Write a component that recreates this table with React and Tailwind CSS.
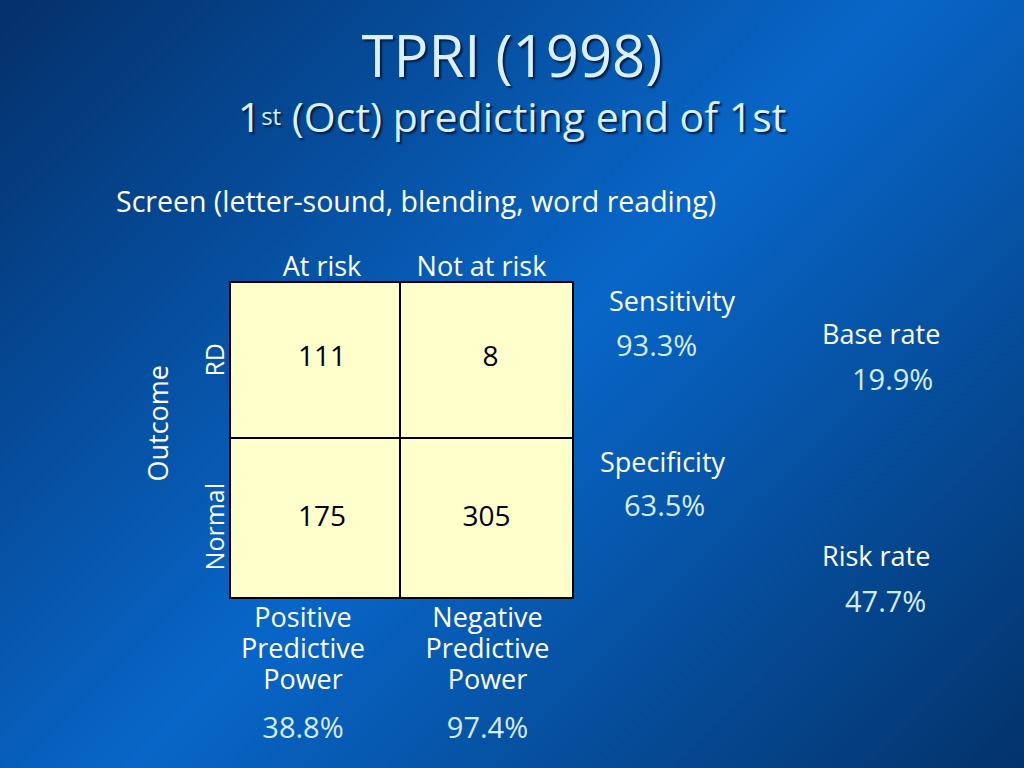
import React from "react";

const cells = [
  ["111", "8"],
  ["175", "305"],
];

function Stat({ label, value, labelPad, valuePad, top, gap }) {
  return (
    <div className={top}>
      <div className={`${labelPad} text-[27px] leading-[30px] text-white`}>{label}</div>
      <div className={`${valuePad} ${gap} text-[29px] leading-[34px] text-[#d6ecff]`}>{value}</div>
    </div>
  );
}

export default function App() {
  return (
    <div
      className="w-[1024px] h-[768px] overflow-hidden text-white bg-[linear-gradient(135deg,#04306a_0%,#0866c8_50%,#03336b_100%)]"
      style={{ fontFamily: '"Open Sans", "DejaVu Sans", sans-serif' }}
    >
      <header className="flex flex-col items-center pt-[25px] text-[#dcefff] [text-shadow:2px_2px_2px_#021d45]">
        <h1 className="text-[58px] leading-[60px]">TPRI (1998)</h1>
        <h2 className="mt-[8px] text-[41px] leading-[46px]">
          1<sup className="text-[24px] relative -top-[7px]">st</sup> (Oct) predicting end of 1st
        </h2>
      </header>

      <p className="mt-[45px] ml-[116px] text-[28.5px] leading-[34px]">
        Screen (letter-sound, blending, word reading)
      </p>

      <div className="flex mt-[37px]">
        {/* matrix */}
        <div className="ml-[136px] grid grid-cols-[44px_49px_172px_173px] grid-rows-[26px_158px_160px_auto]">
          <div />
          <div />
          <div className="flex items-end justify-center text-[27px] leading-[26px] pb-[2px] pl-[14px] whitespace-nowrap">At risk</div>
          <div className="flex items-end justify-center text-[27px] leading-[26px] pb-[2px] pr-[12px] whitespace-nowrap">Not at risk</div>

          <div className="row-span-2 flex items-center justify-center pb-[34px]">
            <span className="[writing-mode:vertical-rl] rotate-180 text-[27px] leading-[30px]">Outcome</span>
          </div>
          <div className="flex items-center justify-end pr-[1px]">
            <span className="[writing-mode:vertical-rl] rotate-180 text-[25px] leading-[28px]">RD</span>
          </div>
          <div className="bg-[#ffffcc] border-2 border-black flex items-center justify-center text-black text-[28px] pb-[10px] pl-[14px]">
            {cells[0][0]}
          </div>
          <div className="bg-[#ffffcc] border-2 border-l-0 border-black flex items-center justify-center text-black text-[28px] pb-[10px] pl-[8px]">
            {cells[0][1]}
          </div>

          <div className="flex items-center justify-end pr-[1px] pt-[16px]">
            <span className="[writing-mode:vertical-rl] rotate-180 text-[25px] leading-[28px]">Normal</span>
          </div>
          <div className="bg-[#ffffcc] border-2 border-t-0 border-black flex items-center justify-center text-black text-[28px] pb-[6px] pl-[14px]">
            {cells[1][0]}
          </div>
          <div className="bg-[#ffffcc] border-2 border-t-0 border-l-0 border-black flex items-center justify-center text-black text-[28px] pb-[6px]">
            {cells[1][1]}
          </div>

          <div />
          <div />
          <div className="flex flex-col items-center pt-[2px] pr-[24px]">
            <p className="text-center text-[27px] leading-[31px]">
              Positive<br />Predictive<br />Power
            </p>
            <span className="mt-[16px] text-[29px] leading-[34px] text-[#d6ecff]">38.8%</span>
          </div>
          <div className="flex flex-col items-center pt-[2px]">
            <p className="text-center text-[27px] leading-[31px]">
              Negative<br />Predictive<br />Power
            </p>
            <span className="mt-[16px] text-[29px] leading-[34px] text-[#d6ecff]">97.4%</span>
          </div>
        </div>

        {/* sensitivity / specificity */}
        <div className="ml-[26px] w-[200px] flex flex-col">
          <Stat top="mt-[31px]" label="Sensitivity" value="93.3%" labelPad="pl-[9px]" valuePad="pl-[16px]" gap="mt-[12px]" />
          <Stat top="mt-[85px]" label="Specificity" value="63.5%" labelPad="" valuePad="pl-[24px]" gap="mt-[11px]" />
        </div>

        {/* rates */}
        <div className="ml-[22px] flex flex-col">
          <Stat top="mt-[64px]" label="Base rate" value="19.9%" labelPad="" valuePad="pl-[30px]" gap="mt-[13px]" />
          <Stat top="mt-[145px]" label="Risk rate" value="47.7%" labelPad="" valuePad="pl-[23px]" gap="mt-[13px]" />
        </div>
      </div>
    </div>
  );
}
